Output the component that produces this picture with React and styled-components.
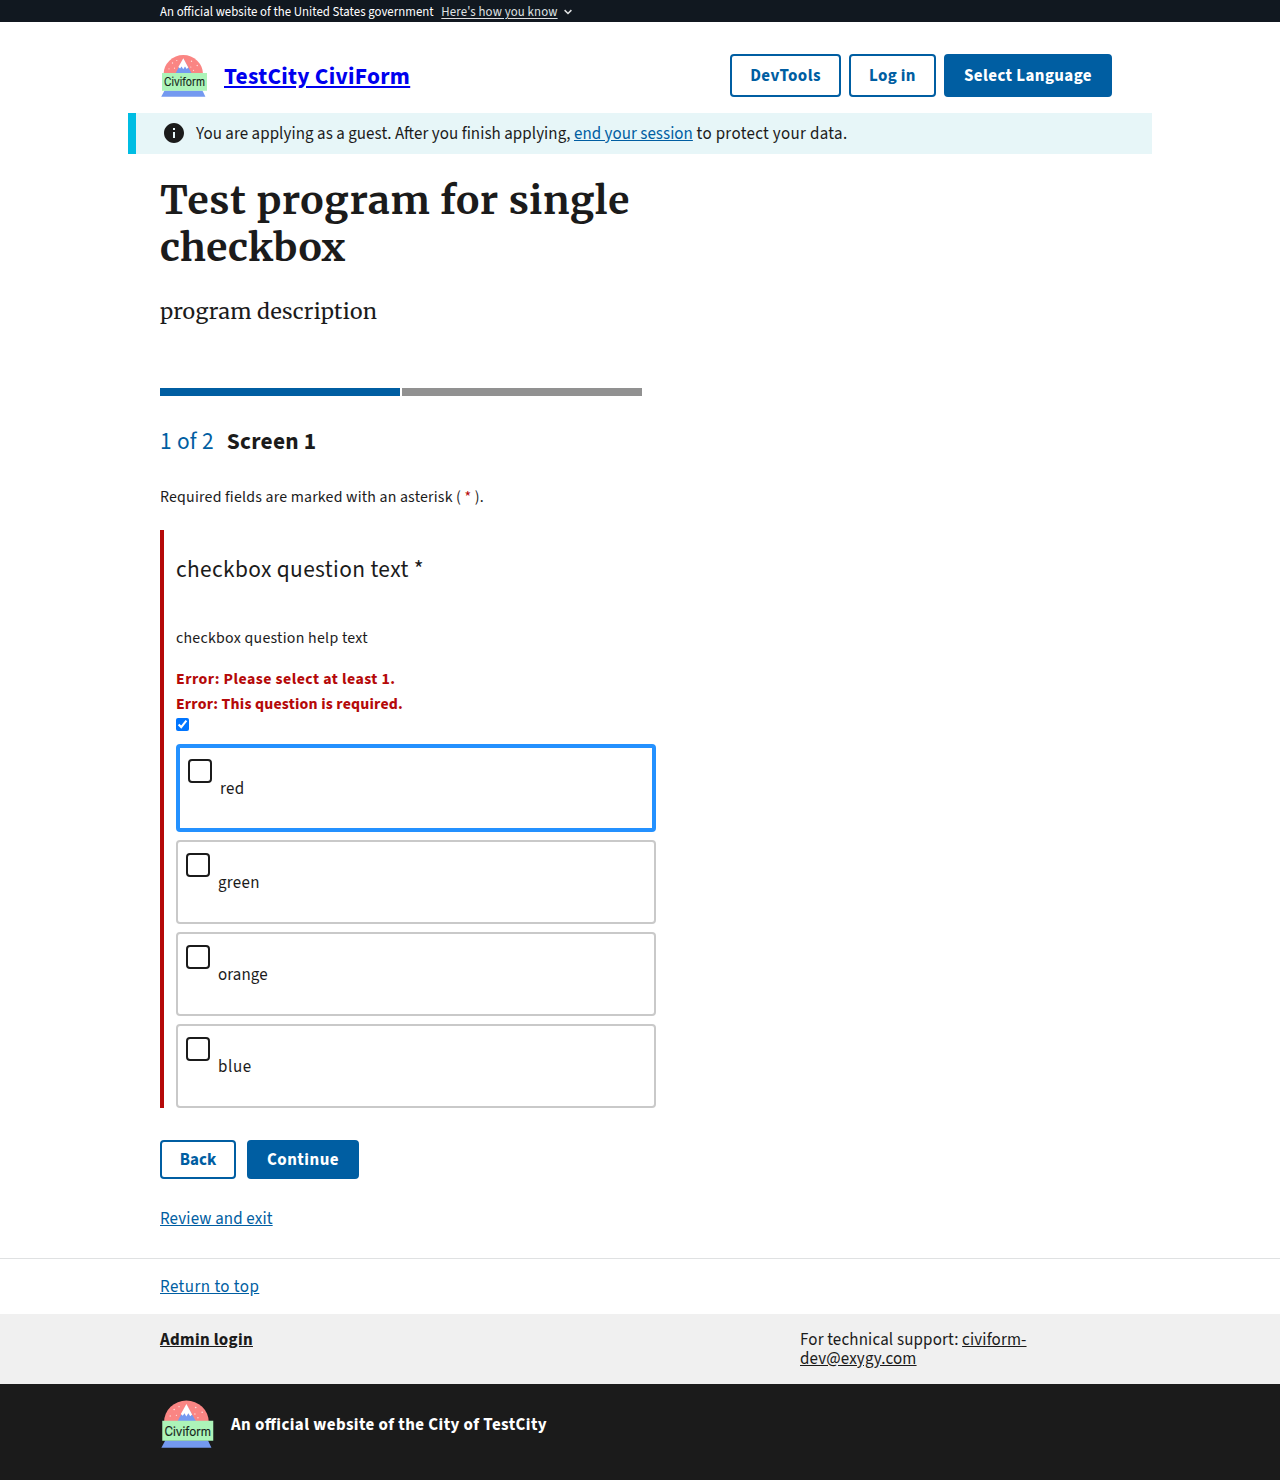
import React from 'react';
import styled, { createGlobalStyle, css } from 'styled-components';

const sans = '"Source Sans 3", "Noto Sans CJK SC", "Noto Sans", sans-serif';
const serif = 'Merriweather, "Noto Serif", "DejaVu Serif", serif';
const ink = '#1b1b1b';
const primary = '#005ea2';

const GlobalStyle = createGlobalStyle`
  *, *::before, *::after { box-sizing: border-box; }
  body {
    margin: 0;
    background: #fff;
    color: ${ink};
    font-family: ${sans};
    font-size: 16.96px;
    line-height: 19px;
    font-feature-settings: "liga" 1;
  }
  h1, h2, p { margin: 0; font-weight: 400; }
`;

const Page = styled.div`
  display: flex;
  flex-direction: column;
  height: 1480px;
  overflow: hidden;
`;

const Track = styled.span`
  letter-spacing: ${(p) => p.$by}px;
`;

const Container = styled.div`
  width: 100%;
  max-width: 1024px;
  margin: 0 auto;
  padding: 0 32px;
`;

const GovBanner = styled.div`
  height: 22px;
  background: #111820;
  color: #fff;
  font-size: 12.8px;
  line-height: 24px;
`;

const GovRow = styled(Container)`
  display: flex;
  align-items: center;
  white-space: nowrap;
`;

const GovLink = styled.a`
  display: flex;
  align-items: center;
  gap: 6px;
  margin-left: 7.6px;
  color: #dfe1e2;
  letter-spacing: 0.14px;
  span { text-decoration: underline; text-underline-offset: 2px; }
`;

const Header = styled.header`
  height: 91px;
  padding-top: 32px;
`;

const HeaderRow = styled(Container)`
  display: flex;
  align-items: flex-start;
  justify-content: space-between;
  padding-right: 40px;
`;

const Brand = styled.div`
  display: flex;
  align-items: center;
  gap: 16px;
  margin-top: -2px;
`;

const BrandName = styled.a`
  padding-top: 2px;
  color: #0000ee;
  font-size: 23.36px;
  font-weight: 700;
  line-height: 28px;
  letter-spacing: 0.32px;
  text-decoration: underline;
`;

const ButtonRow = styled.div`
  display: flex;
  gap: ${(p) => p.$gap}px;
`;

const Button = styled.button`
  width: ${(p) => p.$width}px;
  height: ${(p) => p.$height}px;
  padding: 2px 0 0;
  border: 2px solid ${primary};
  border-radius: 4px;
  background: ${(p) => (p.$solid ? primary : '#fff')};
  color: ${(p) => (p.$solid ? '#fff' : primary)};
  font: 700 16.96px/19px ${sans};
  letter-spacing: ${(p) => p.$track || 0}px;
  white-space: nowrap;
`;

const Alert = styled.div`
  display: flex;
  align-items: center;
  width: 1024px;
  height: 41px;
  margin: 0 auto;
  padding-left: 26px;
  border-left: 8px solid #00bde3;
  background: #e7f6f8;
  white-space: nowrap;
  svg { flex: none; margin: 0 10px 1px 0; }
  p { padding-top: 2px; }
`;

const Link = styled.a`
  color: ${primary};
  text-decoration: underline;
  letter-spacing: ${(p) => p.$track || 0}px;
`;

const Title = styled.h1`
  width: 512px;
  padding-top: 23px;
  font: 700 39.04px/47px ${serif};
  letter-spacing: 0.7px;
`;

const Description = styled.p`
  margin-top: 23px;
  font: 400 21.44px/36px ${serif};
  letter-spacing: 0.24px;
`;

const Progress = styled.div`
  display: flex;
  gap: 2px;
  margin-top: 58px;
`;

const Segment = styled.div`
  width: 240px;
  height: 8px;
  background: ${(p) => (p.$current ? primary : '#919191')};
`;

const StepHeading = styled.h2`
  display: flex;
  gap: 13px;
  margin-top: 33px;
  font-size: 23.36px;
  line-height: 26px;
`;

const StepCount = styled.span`
  color: ${primary};
  letter-spacing: 0.3px;
`;

const StepName = styled.strong`
  letter-spacing: 0.25px;
`;

const small = css`
  font-size: 15.84px;
  line-height: 25px;
`;

const RequiredNote = styled.p`
  ${small}
  margin-top: 30px;
  letter-spacing: 0.21px;
  abbr { color: #b50909; }
`;

const Question = styled.section`
  width: 496px;
  height: 578px;
  margin-top: 20px;
  padding-left: 12px;
  border-left: 4px solid #b50909;
`;

const QuestionText = styled.p`
  padding-top: 26px;
  font-size: 23.36px;
  line-height: 28px;
  letter-spacing: 0.37px;
`;

const HelpText = styled.p`
  ${small}
  margin-top: 42px;
  letter-spacing: 0.27px;
`;

const Errors = styled.div`
  ${small}
  margin-top: 16px;
  color: #b50909;
  p { font-weight: 700; }
`;

const Toggle = styled.input`
  display: block;
  width: 13px;
  height: 13px;
  margin: 1px 0 13px;
`;

const Options = styled.div`
  display: flex;
  flex-direction: column;
  gap: 8px;
`;

const Option = styled.label`
  display: flex;
  gap: 8px;
  height: ${(p) => (p.$focused ? 88 : 84)}px;
  padding: 11px 8px;
  border: ${(p) => (p.$focused ? '4px solid #2491ff' : '2px solid #c9c9c9')};
  border-radius: 4px;
`;

const Box = styled.span`
  width: 24px;
  height: 24px;
  border: 2px solid ${ink};
  border-radius: 4px;
`;

const OptionLabel = styled.span`
  padding-top: 21px;
  letter-spacing: ${(p) => p.$track}px;
`;

const Actions = styled.div`
  margin-top: 32px;
`;

const Review = styled.div`
  margin-top: 31px;
`;

const ReturnBar = styled.div`
  height: 56px;
  margin-top: 29px;
  padding-top: 19px;
  border-top: 1px solid #dfe1e2;
`;

const SupportBar = styled.footer`
  height: 70px;
  padding-top: 17px;
  background: #f0f0f0;
`;

const SupportRow = styled(Container)`
  display: grid;
  grid-template-columns: 640px 240px;
  a { color: ${ink}; }
`;

const Identity = styled.div`
  flex: 1;
  padding-top: 13px;
  background: ${ink};
  color: #fff;
`;

const IdentityRow = styled(Container)`
  display: flex;
  align-items: center;
  gap: 16.6px;
`;

const IdentityText = styled.strong`
  padding-top: 2px;
  letter-spacing: 0.42px;
`;

function Logo({ size }) {
  return (
    <svg width={size} height={size} viewBox="0 0 48 48">
      <path d="M3.6 22A19.7 18.9 0 0 1 43 22z" fill="#fa8583" />
      <g fill="#fff" fillOpacity=".75">
        <circle cx="9" cy="16.8" r=".6" /><circle cx="12.5" cy="11" r=".7" />
        <circle cx="16.8" cy="8.5" r=".6" /><circle cx="14.5" cy="16.2" r=".6" />
        <circle cx="31.5" cy="9.2" r=".7" /><circle cx="37.2" cy="13.5" r=".7" />
        <circle cx="30.8" cy="15" r=".6" /><circle cx="33.5" cy="18.3" r=".6" />
      </g>
      <path d="M15.6 21.2L23.3 6.8l8.3 14.4z" fill="#7499f0" />
      <path d="M23.3 6.2l5 9.2-1.6 1.6-1.7-2.6-1.8 2.8-1.6-2.8-1.5 2.2-1.7-1.6z" fill="#fff" />
      <path d="M4.6 38.4h37.8l3 6.4H1.2z" fill="#7499f0" />
      <path d="M2 21h45v17.7H2z" fill="#acf4b8" />
      <text x="4" y="34.2" textLength="41" lengthAdjust="spacingAndGlyphs" fontFamily="Inter, Roboto, sans-serif" fontSize="11.3" fontWeight="400" stroke="#16251b" strokeWidth=".15" fill="#16251b">Civiform</text>
    </svg>
  );
}

const options = [
  { label: 'red', track: 0.35, focused: true },
  { label: 'green', track: 0.3 },
  { label: 'orange', track: 0.1 },
  { label: 'blue', track: 0.65 },
];

export default function App() {
  return (
    <Page>
      <GlobalStyle />
      <GovBanner>
        <GovRow>
          <Track $by={0.04}>An official website of the United States government</Track>
          <GovLink>
            <span>Here's how you know</span>
            <svg width="8" height="6" viewBox="0 0 8 6" fill="none" stroke="currentColor" strokeWidth="1.5">
              <path d="M.6 1.1L4 4.5 7.4 1.1" />
            </svg>
          </GovLink>
        </GovRow>
      </GovBanner>
      <Header>
        <HeaderRow>
          <Brand>
            <Logo size={48} />
            <BrandName>TestCity CiviForm</BrandName>
          </Brand>
          <ButtonRow $gap={8}>
            <Button $width={111} $height={43} $track={0.44}>DevTools</Button>
            <Button $width={87} $height={43} $track={0.35}>Log in</Button>
            <Button $width={168} $height={43} $track={0.41} $solid>Select Language</Button>
          </ButtonRow>
        </HeaderRow>
      </Header>
      <Alert>
        <svg width="24" height="24" viewBox="0 0 24 24" fill={ink}>
          <path d="M12 2C6.48 2 2 6.48 2 12s4.48 10 10 10 10-4.48 10-10S17.52 2 12 2zm1 15h-2v-6h2v6zm0-8h-2V7h2v2z" />
        </svg>
        <p>
          <Track $by={0.055}>You are applying as a guest. After you finish applying, </Track>
          <Link $track={0.04}>end your session</Link>
          <Track $by={0.33}> to protect your data.</Track>
        </p>
      </Alert>
      <Container>
        <Title>Test program for single <Track $by={0.3}>checkbox</Track></Title>
        <Description>program description</Description>
        <Progress>
          <Segment $current />
          <Segment />
        </Progress>
        <StepHeading>
          <StepCount>1 of 2</StepCount>
          <StepName>Screen 1</StepName>
        </StepHeading>
        <RequiredNote>
          Required fields are marked with an asterisk ( <abbr>*</abbr> ).
        </RequiredNote>
        <Question>
          <QuestionText>checkbox question text *</QuestionText>
          <HelpText>checkbox question help text</HelpText>
          <Errors>
            <p><Track $by={0.47}>Error: Please select at least 1.</Track></p>
            <p><Track $by={0.2}>Error: This question is required.</Track></p>
          </Errors>
          <Toggle type="checkbox" defaultChecked />
          <Options>
            {options.map((o) => (
              <Option key={o.label} $focused={o.focused}>
                <Box />
                <OptionLabel $track={o.track}>{o.label}</OptionLabel>
              </Option>
            ))}
          </Options>
        </Question>
        <Actions>
          <ButtonRow $gap={11}>
            <Button $width={76} $height={39}>Back</Button>
            <Button $width={112} $height={39} $track={0.5} $solid>Continue</Button>
          </ButtonRow>
        </Actions>
        <Review><Link $track={0.15}>Review and exit</Link></Review>
      </Container>
      <ReturnBar>
        <Container><Link $track={0.46}>Return to top</Link></Container>
      </ReturnBar>
      <SupportBar>
        <SupportRow>
          <strong><Link $track={0.33}>Admin login</Link></strong>
          <p>
            <Track $by={0.16}>For technical support: </Track>
            <Link $track={0.15}>civiform-dev@exygy.com</Link>
          </p>
        </SupportRow>
      </SupportBar>
      <Identity>
        <IdentityRow>
          <Logo size={54.4} />
          <IdentityText>An official website of the City of TestCity</IdentityText>
        </IdentityRow>
      </Identity>
    </Page>
  );
}
